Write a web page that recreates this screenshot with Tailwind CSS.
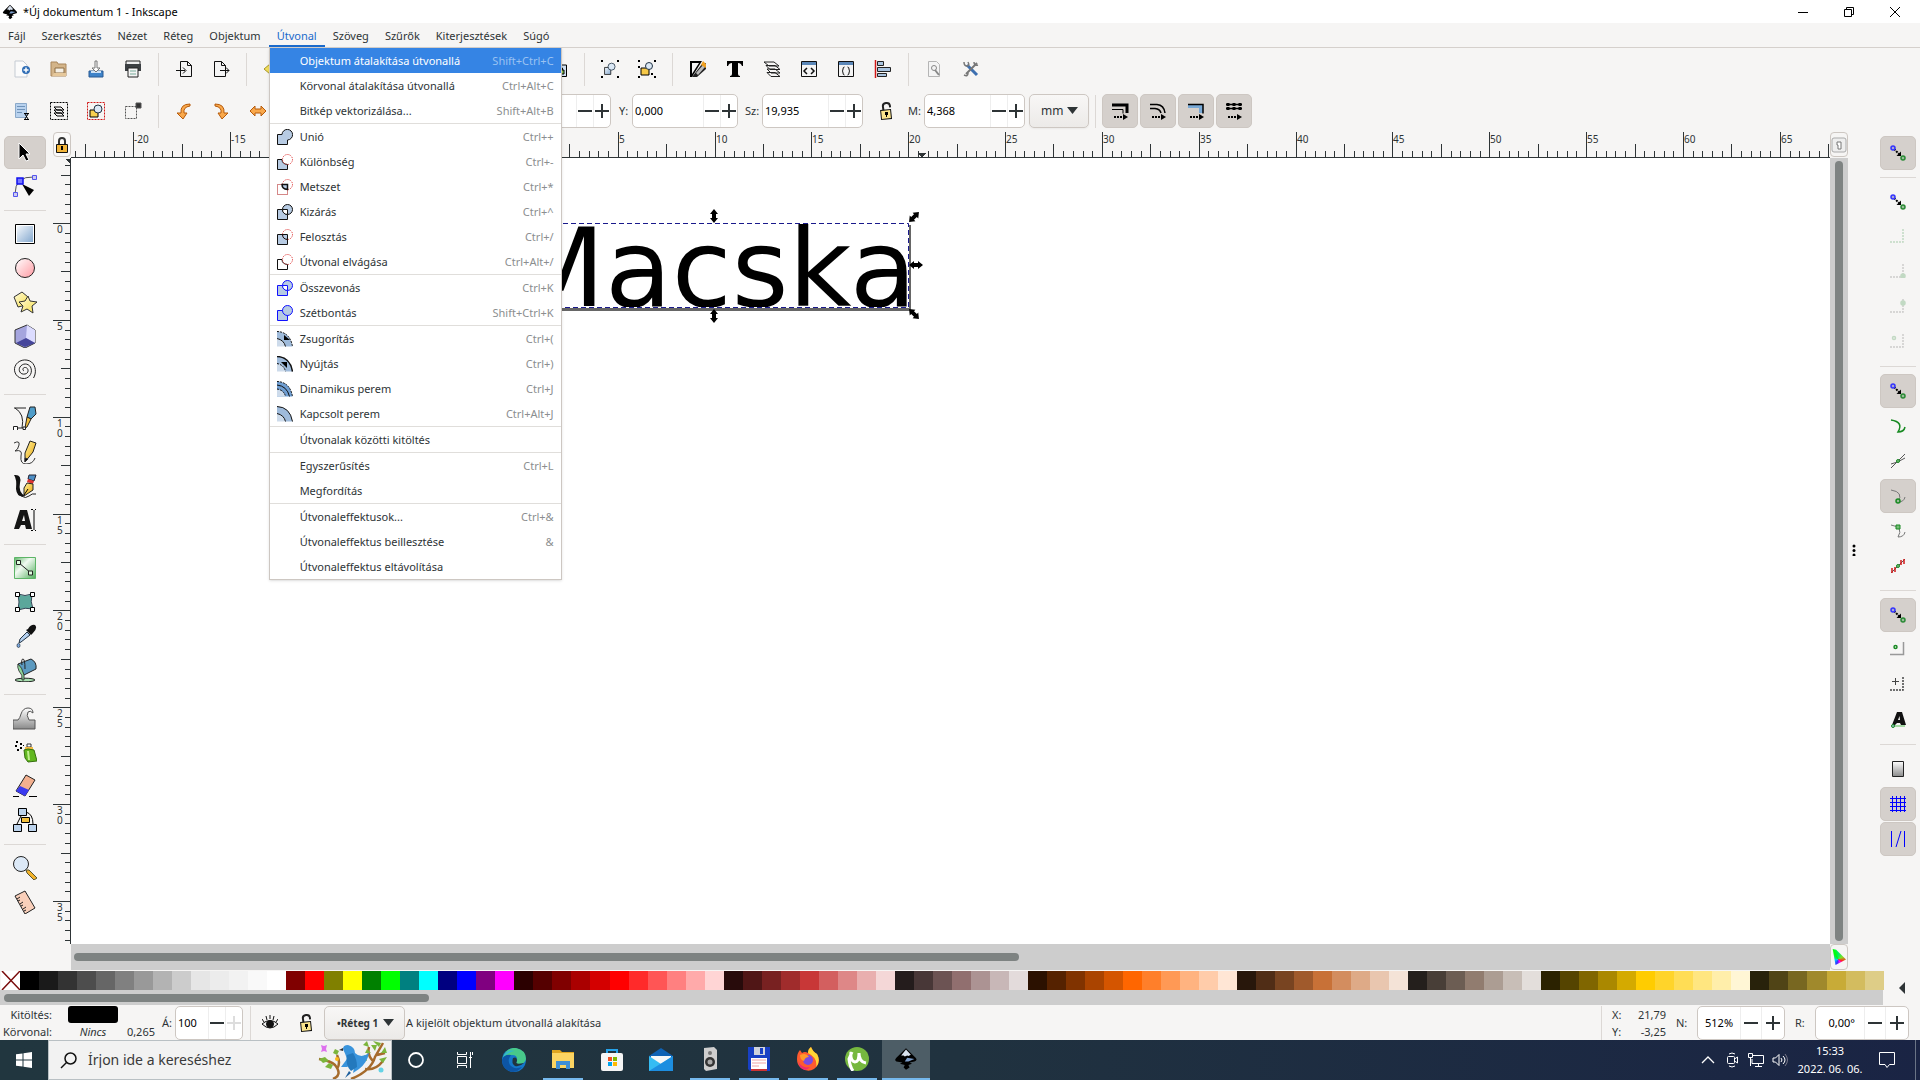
<!DOCTYPE html>
<html lang="hu">
<head>
    <meta charset="UTF-8">
    <meta name="viewport" content="width=device-width, initial-scale=1.0">
    <title>*Új dokumentum 1 - Inkscape</title>
    <script src="https://cdn.jsdelivr.net/npm/@tailwindcss/browser@4"></script>
</head>
<body class="h-screen flex flex-col overflow-hidden bg-[#f6f5f4] text-[#2e3436] text-[11px] leading-4 font-['Noto_Sans','Open_Sans',sans-serif]">

    <!-- shared icons -->
    <svg class="absolute size-0">
        <defs>
            <linearGradient id="g-blue" x1="0" y1="0" x2="1" y2="1"><stop offset="0" stop-color="#f4f8fc"/><stop offset="1" stop-color="#85a9cf"/></linearGradient>
            <linearGradient id="g-pink" x1="0" y1="0" x2="1" y2="1"><stop offset="0" stop-color="#fff"/><stop offset="1" stop-color="#ff9aa2"/></linearGradient>
            <linearGradient id="g-yel" x1="0" y1="0" x2="1" y2="1"><stop offset="0" stop-color="#fffbe0"/><stop offset="1" stop-color="#f7e04a"/></linearGradient>
            <linearGradient id="g-green" x1="0" y1="0" x2="1" y2="1"><stop offset="0" stop-color="#5db567"/><stop offset=".4" stop-color="#f2faf2"/><stop offset="1" stop-color="#4fae5b"/></linearGradient>
            <linearGradient id="g-gray" x1="0" y1="0" x2="0" y2="1"><stop offset="0" stop-color="#fff"/><stop offset="1" stop-color="#8a8a8a"/></linearGradient>
            <linearGradient id="g-gold" x1="0" y1="0" x2="1" y2="1"><stop offset="0" stop-color="#fff3a0"/><stop offset="1" stop-color="#e8a000"/></linearGradient>
            <symbol id="inkscape" viewBox="0 0 20 20">
                <path d="M10 1 18 9Q20 11 17 12L13 13 15 14 12 15 13 17 10 19 8 17 9 15 5 14 7 13 2 12Q0 11 2 9Z" fill="#000"/>
                <path d="M10 2 14 6.500 12 7.500 11 7 9 8 8 7 6 7Z" fill="#d9e2ee"/><path d="M11 9 17 10 12 12 9 12Z" fill="#7b9cc9"/>
            </symbol>
            <symbol id="snap" viewBox="0 0 16 16">
                <path d="M4 4 10 10" stroke="#000" stroke-width="2" stroke-dasharray="2 1"/><path d="M11 11V6.500L6.500 11Z"/>
                <circle cx="3" cy="3" r="2" fill="#aac" stroke="#33f" stroke-width="1.500"/><circle cx="13" cy="13" r="2" fill="#9b9" stroke="#2a8a35" stroke-width="1.500"/>
            </symbol>
            <symbol id="unlock" viewBox="0 0 16 20">
                <path d="M5 10V5Q5 2 8.500 2T12 5V7" transform="rotate(-8 8 6)" fill="none" stroke="#222" stroke-width="2"/>
                <rect x="3" y="9" width="10" height="9" transform="rotate(-6 8 13)" fill="#fbe58d" stroke="#111"/><path d="M7 11h3v3h-1v2h-1v-2h-1z"/>
            </symbol>
            <symbol id="shapes" viewBox="0 0 18 18"><path d="M2 7h8v9H2z" fill="url(#g-blue)" stroke="#111"/><circle cx="11" cy="6" r="4.500" fill="#dbe8f5" stroke="#234"/></symbol>
            <symbol id="corners" viewBox="0 0 18 18"><path d="M0 0h2v2H0zM16 0h2v2h-2zM0 16h2v2H0zM16 16h2v2h-2z"/></symbol>
            <symbol id="minus" viewBox="0 0 14 14"><path d="M0 6h14v2H0z" fill="currentColor"/></symbol>
            <symbol id="plus" viewBox="0 0 14 14"><path d="M0 6h14v2H0zM6 0h2v14H6z" fill="currentColor"/></symbol>
            <symbol id="turn" viewBox="0 0 18 18"><path d="M15 2Q5 2 6 11H2L8 17 12 11H9Q8 5 15 4Z" fill="#f9a84b" stroke="#b65a0a"/></symbol>
            <symbol id="flip" viewBox="0 0 18 18"><path d="M1 9 6 4V7H12V4L17 9 12 14V11H6V14Z" fill="#f9a84b" stroke="#b65a0a"/></symbol>
            <symbol id="arrow" viewBox="0 0 12 14"><path d="M6 0 10 5H8V9H10L6 14 2 9H4V5H2Z"/></symbol>
        </defs>
    </svg>

    <!-- title bar -->
    <header class="h-[23px] shrink-0 flex items-center bg-white text-black">
        <svg class="size-4 ml-[2px] mr-[5px]"><use href="#inkscape"/></svg>
        <h1 class="flex-1">*Új dokumentum 1 - Inkscape</h1>
        <button aria-label="Kis méret" class="w-[46px] h-full grid place-items-center"><svg class="size-[10px]" viewBox="0 0 10 10"><path d="M0 5.500h10" stroke="#000"/></svg></button>
        <button aria-label="Előző méret" class="w-[46px] h-full grid place-items-center"><svg class="size-[10px]" viewBox="0 0 10 10" fill="none" stroke="#000"><path d="M.5 2.500h7v7h-7zM2.500 2.500v-2h7v7h-2"/></svg></button>
        <button aria-label="Bezárás" class="w-[46px] h-full mr-[2px] grid place-items-center"><svg class="size-[10px]" viewBox="0 0 10 10" stroke="#000"><path d="M0 0 10 10M10 0 0 10"/></svg></button>
    </header>

    <!-- menu bar -->
    <nav class="h-[25px] shrink-0 flex border-b border-[#d5d0cc] [&>button]:px-2 [&>button]:pt-[2px]">
        <button>Fájl</button>
        <button>Szerkesztés</button>
        <button>Nézet</button>
        <button>Réteg</button>
        <button>Objektum</button>
        <div class="relative flex">
            <button class="px-2 pt-1 text-[#1b6acb] border-b-2 border-[#1b6acb]">Útvonal</button>
            <ul id="path-menu" class="absolute z-10 top-full left-0 mt-px w-[293px] bg-white border border-t-0 border-[#cdc7c2] shadow-sm"></ul>
        </div>
        <button>Szöveg</button>
        <button>Szűrők</button>
        <button>Kiterjesztések</button>
        <button>Súgó</button>
    </nav>

    <!-- command bar -->
    <div class="h-[42px] shrink-0 flex items-center gap-px pl-1 *:shrink-0 [&>button]:w-9 [&>button]:h-8 [&>button]:grid [&>button]:place-items-center [&>hr]:w-px [&>hr]:h-[33px] [&>hr]:mx-[6px] [&>hr]:border-0 [&>hr]:bg-[#dcd8d5] [&_svg]:size-[18px]">
        <button aria-label="Új"><svg viewBox="0 0 18 18"><path d="M2 1h8l4 4v12H2z" fill="#fbfbfb" stroke="#c5cbd3"/><circle cx="13" cy="10" r="4" fill="#2f6db5"/><path d="M13 7.500v5M10.500 10h5" stroke="#fff" stroke-width="1.500"/></svg></button>
        <button aria-label="Megnyitás"><svg viewBox="0 0 18 18"><path d="M1 2h6l1 2h8v12H1z" fill="#d3b489" stroke="#a9855a"/><path d="M5 8h9v5H5z" fill="#f5f0e6" stroke="#8c6c43"/><path d="M2 16 4 13h12v3z" fill="#e6c89b"/></svg></button>
        <button aria-label="Mentés"><svg viewBox="0 0 18 18"><path d="M2 11h14v6H2z" fill="#3f83c9" stroke="#2b5a93"/><path d="M4 11h10v2H4z" fill="#cfe2f6"/><path d="M8 1h2v7h3l-4 4-4-4h3z" fill="#fff" stroke="#777"/></svg></button>
        <button aria-label="Nyomtatás"><svg viewBox="0 0 18 18"><path d="M2 1h14v4H2z" fill="#eee" stroke="#222"/><path d="M1 4h16v7H1z" fill="#3b3f42"/><path d="M4 8h10v9H4z" fill="#f4f4f4" stroke="#222"/><path d="M6 11h6M6 14h6" stroke="#7a9"/></svg></button>
        <hr>
        <button aria-label="Importálás"><svg viewBox="0 0 18 18" stroke="#111"><path d="M5.500 1.500h7l4 4v11h-11z" fill="#f4f4f4"/><path d="M12.500 1.500v4h4M1 10.500h9M8 7.500l3 3-3 3" fill="none"/></svg></button>
        <button aria-label="Exportálás"><svg viewBox="0 0 18 18" stroke="#111"><path d="M2.500 1.500h7l4 4v11h-11z" fill="#f4f4f4"/><path d="M9.500 1.500v4h4M8 10.500h9M14 7.500l3 3-3 3" fill="none"/></svg></button>
        <hr>
        <button aria-label="Visszavonás"><svg viewBox="0 0 18 18"><path d="M1 9 7 4V7Q16 6 16 15 13 10 7 11V14Z" fill="#f3df5b" stroke="#a8962a"/></svg></button>
        <button aria-label="Mégis"><svg viewBox="0 0 18 18"><path d="M17 9 11 4V7Q2 6 2 15 5 10 11 11V14Z" fill="#9ed36a" stroke="#4b8a1e"/></svg></button>
        <hr>
        <button aria-label="Másolás"></button>
        <button aria-label="Kivágás"></button>
        <button aria-label="Beillesztés"></button>
        <hr>
        <button aria-label="Nagyítás a kijelölésre"></button>
        <button aria-label="Nagyítás a rajzra"></button>
        <button aria-label="Klón leválasztása"><svg viewBox="0 0 18 18"><path d="M5 5h11.500v11.500H5z" fill="#cfdff0" stroke="#000"/><path d="M8 10h6v4H8zM9.500 10V8h3v2" fill="#8bc34a" stroke="#000"/></svg></button>
        <hr>
        <button aria-label="Csoportosítás"><svg viewBox="0 0 18 18"><use href="#corners"/><use href="#shapes" x="2" y="2" width="14" height="14"/></svg></button>
        <button aria-label="Csoport szétbontása"><svg viewBox="0 0 18 18"><use href="#corners"/><path d="M3 8h8v7H3z" fill="#f7c948" stroke="#000"/><circle cx="11" cy="6" r="3.500" fill="#dbe8f5" stroke="#234"/><path d="M0 6h2v2H0zM13 13h2v2h-2z"/></svg></button>
        <hr>
        <button aria-label="Kitöltés és körvonal"><svg viewBox="0 0 18 18"><path d="M1 1h12L3 17H1z" fill="#000"/><path d="M3 3h7L3 14z" fill="#f4f4f4"/><path d="M17 3v6L8 17H3L13 4z" fill="#222"/><path d="M7 13 14 5l2 2-7 8z" fill="#bbb"/><path d="M14 1l3 3v4l-5-3z" fill="#f0a020"/></svg></button>
        <button aria-label="Szöveg és betűkészlet"><svg viewBox="0 0 18 18"><path d="M1 1h16v5h-1q-1-3-4-3v11q0 2 2 2v1H4v-1q2 0 2-2V3Q3 3 2 6H1z"/></svg></button>
        <button aria-label="Rétegek"><svg viewBox="0 0 18 18" fill="#f6f5f4" stroke="#222"><path d="M4 12.500h8l5 4H8zM4 9h8l5 4H8zM3 5.500h9l5 4H7zM1 2h10l5 4H6z"/></svg></button>
        <button aria-label="XML-szerkesztő"><svg viewBox="0 0 18 18" fill="none" stroke="#111"><path d="M1.500 1.500h15v15h-15z" fill="#f4f4f4"/><path d="M2 3.500h14" stroke="#5b87b8" stroke-width="3"/><path d="M7 8 4 11 7 14M11 8 14 11 11 14" stroke-width="1.500"/></svg></button>
        <button aria-label="Objektumok"><svg viewBox="0 0 18 18" fill="none" stroke="#111"><path d="M1.500 1.500h15v15h-15z" fill="#f4f4f4"/><path d="M2 3.500h14" stroke="#5b87b8" stroke-width="3"/><path d="M7.500 7Q6 7 6 9T5 11Q6 11 6 13T7.500 15M10.500 7Q12 7 12 9T13 11Q12 11 12 13T10.500 15"/></svg></button>
        <button aria-label="Igazítás"><svg viewBox="0 0 18 18"><path d="M1.500 0v18" stroke="#d01818" stroke-width="1.500"/><path d="M3.500 1.500h6v4h-6zM3.500 7.500h13v4h-13zM3.500 13.500h9v3h-9z" fill="#a9c4e0" stroke="#222"/></svg></button>
        <hr>
        <button aria-label="Dokumentum tulajdonságai"><svg viewBox="0 0 18 18" fill="none" stroke="#b5b5b5"><path d="M3.500 1.500h8l3 3v12h-11z" fill="#f4f4f4"/><circle cx="9" cy="8" r="2.500" stroke="#888"/><path d="M10 10 14 15" stroke="#888" stroke-width="2"/></svg></button>
        <button aria-label="Beállítások"><svg viewBox="0 0 18 18" fill="none"><path d="M5 5 15 15" stroke="#3d6fb0" stroke-width="3"/><path d="M15 3 4 14" stroke="#777" stroke-width="2"/><path d="M2 2Q2 6 5 6T6 2M12 2Q12 6 16 5M2 15Q6 17 6 13" stroke="#777" stroke-width="1.500"/></svg></button>
    </div>

    <!-- tool controls -->
    <div class="h-10 shrink-0 flex items-center pl-1 pt-[2px] *:shrink-0 [&_hr]:w-px [&_hr]:h-[33px] [&_hr]:mx-[6px] [&_hr]:border-0 [&_hr]:bg-[#dcd8d5]">
        <div class="flex items-center gap-px [&>button]:w-9 [&>button]:h-8 [&>button]:grid [&>button]:place-items-center [&_svg]:size-[18px]">
            <button aria-label="Összes kijelölése"><svg viewBox="0 0 18 18"><path d="M2.500 1.500h11v14h-11z" fill="#b9d2ee" stroke="#8ba9c9"/><path d="M4 4.500h8M4 7.500h8M4 10.500h5" stroke="#6f93ba"/><path d="M11 11.500h5M11 17.500h5M12 12l3 5M15 12l-3 5" stroke="#000"/></svg></button>
            <button aria-label="Kijelölés minden rétegen"><svg viewBox="0 0 18 18" fill="none" stroke="#000"><path d="M.5 .5h17v17h-17z" stroke-dasharray="2 1"/><path d="M4 11h7l3 3H7zM4 8h7l3 3H7zM4 5h7l3 3H7z" fill="#f6f5f4"/></svg></button>
            <button aria-label="Kijelölés megszüntetése"><svg viewBox="0 0 18 18"><path d="M.5 .5h17v17h-17z" fill="none" stroke="#d01818" stroke-dasharray="2 1"/><path d="M3 8h8v7H3z" fill="#f7d14f" stroke="#000"/><circle cx="11" cy="7" r="4" fill="#dbe8f5" stroke="#234"/></svg></button>
            <button aria-label="Érintéses kijelölés"><svg viewBox="0 0 18 18" fill="none" stroke="#555"><path d="M1.500 4.500h11v12h-11z" stroke-dasharray="2 1"/><path d="M12 1h5v5h-5z" fill="#333"/></svg></button>
            <hr>
            <button aria-label="Forgatás balra"><svg><use href="#turn"/></svg></button>
            <button aria-label="Forgatás jobbra"><svg class="-scale-x-100"><use href="#turn"/></svg></button>
            <button aria-label="Vízszintes tükrözés"><svg><use href="#flip"/></svg></button>
            <button aria-label="Függőleges tükrözés"><svg class="rotate-90"><use href="#flip"/></svg></button>
            <hr>
            <button aria-label="Legfelülre"></button>
            <button aria-label="Feljebb"></button>
            <button aria-label="Lejjebb"></button>
            <button aria-label="Legalulra"></button>
            <hr>
        </div>
        <label for="pos-x" class="w-4">X:</label>
        <div class="w-[106px] h-[34px] flex bg-white border border-[#cdc7c2] rounded-[5px] text-black">
            <input id="pos-x" value="0,000" class="min-w-0 flex-1 pl-[2px]">
            <button aria-label="Csökkentés" class="w-[17px] border-l border-[#eee] grid place-items-center text-[#2e3436]"><svg class="size-[14px]"><use href="#minus"/></svg></button>
            <button aria-label="Növelés" class="w-[17px] border-l border-[#eee] grid place-items-center text-[#2e3436]"><svg class="size-[14px]"><use href="#plus"/></svg></button>
        </div>
        <label for="pos-y" class="w-[21px] pl-2">Y:</label>
        <div class="w-[106px] h-[34px] flex bg-white border border-[#cdc7c2] rounded-[5px] text-black">
            <input id="pos-y" value="0,000" class="min-w-0 flex-1 pl-[2px]">
            <button aria-label="Csökkentés" class="w-[17px] border-l border-[#eee] grid place-items-center text-[#2e3436]"><svg class="size-[14px]"><use href="#minus"/></svg></button>
            <button aria-label="Növelés" class="w-[17px] border-l border-[#eee] grid place-items-center text-[#2e3436]"><svg class="size-[14px]"><use href="#plus"/></svg></button>
        </div>
        <label for="size-w" class="w-6 pl-[7px]">Sz:</label>
        <div class="w-[101px] h-[34px] flex bg-white border border-[#cdc7c2] rounded-[5px] text-black">
            <input id="size-w" value="19,935" class="min-w-0 flex-1 pl-[2px]">
            <button aria-label="Csökkentés" class="w-[17px] border-l border-[#eee] grid place-items-center text-[#2e3436]"><svg class="size-[14px]"><use href="#minus"/></svg></button>
            <button aria-label="Növelés" class="w-[17px] border-l border-[#eee] grid place-items-center text-[#2e3436]"><svg class="size-[14px]"><use href="#plus"/></svg></button>
        </div>
        <button aria-label="Arány rögzítése" class="w-[45px] h-8 grid place-items-center"><svg class="w-4 h-5"><use href="#unlock"/></svg></button>
        <label for="size-h" class="w-4">M:</label>
        <div class="w-[101px] h-[34px] flex bg-white border border-[#cdc7c2] rounded-[5px] text-black">
            <input id="size-h" value="4,368" class="min-w-0 flex-1 pl-[2px]">
            <button aria-label="Csökkentés" class="w-[17px] border-l border-[#eee] grid place-items-center text-[#2e3436]"><svg class="size-[14px]"><use href="#minus"/></svg></button>
            <button aria-label="Növelés" class="w-[17px] border-l border-[#eee] grid place-items-center text-[#2e3436]"><svg class="size-[14px]"><use href="#plus"/></svg></button>
        </div>
        <div class="relative ml-1 w-[60px] h-[34px]">
            <select aria-label="Mértékegység" class="size-full appearance-none pl-[11px] border border-[#cdc7c2] rounded-[5px] bg-linear-to-b from-[#f8f7f6] to-[#eceae8] shadow-xs text-[12px]"><option>mm</option><option>px</option></select>
            <svg class="absolute right-[11px] top-[13px] w-[11px] h-[7px] pointer-events-none" viewBox="0 0 11 7"><path d="M0 0h11L5.500 7z" fill="#2e3436"/></svg>
        </div>
        <hr>
        <div class="flex gap-[2px] [&>button]:w-9 [&>button]:h-[34px] [&>button]:grid [&>button]:place-items-center [&>button]:bg-[#d5d0cc] [&>button]:border [&>button]:border-[#cdc7c2] [&>button]:rounded-[5px] [&_svg]:size-[18px]">
            <button aria-label="Körvonal méretezése"><svg viewBox="0 0 18 18" fill="none" stroke="#000"><path d="M1 3h15v8" stroke-width="3"/><path d="M1 7.500h11v4"/><path d="M3 15h10" stroke-width="2" stroke-dasharray="2 1"/><path d="M12 12l5 3-5 3z" fill="#000" stroke="none"/></svg></button>
            <button aria-label="Sarkok méretezése"><svg viewBox="0 0 18 18" fill="none" stroke="#000"><path d="M1 2.500h7Q15 3 16 11M1 6.500h5Q11 7 12 11" stroke-width="1.500"/><path d="M3 15h10" stroke-width="2" stroke-dasharray="2 1"/><path d="M12 12l5 3-5 3z" fill="#000" stroke="none"/></svg></button>
            <button aria-label="Színátmenetek mozgatása"><svg viewBox="0 0 18 18" fill="none" stroke="#000"><path d="M1 2h15v9h-4V6H1z" fill="#79a9d6" stroke="none"/><path d="M1 2.500h15v9" stroke-width="1.500"/><path d="M3 15h10" stroke-width="2" stroke-dasharray="2 1"/><path d="M12 12l5 3-5 3z" fill="#000" stroke="none"/></svg></button>
            <button aria-label="Minták mozgatása"><svg viewBox="0 0 18 18" fill="none" stroke="#000"><path d="M1 2.500h16M1 6.500h16" stroke-width="1.500"/><path d="M3 1v8M9 1v8M15 1v8" stroke-width="3" stroke-dasharray="3 1"/><path d="M3 15h10" stroke-width="2" stroke-dasharray="2 1"/><path d="M12 12l5 3-5 3z" fill="#000" stroke="none"/></svg></button>
        </div>
    </div>

    <main class="flex-1 min-h-0 flex">
        <!-- toolbox -->
        <div class="w-[53px] shrink-0 flex flex-col gap-px pt-[6px] pl-1 pr-[7px] [&>button]:h-[33px] [&>button]:grid [&>button]:place-items-center [&>button]:rounded-[5px] [&>hr]:my-[6px] [&>hr]:border-[#dcd8d5] [&_svg]:size-6 [&_svg]:mb-px">
            <button aria-label="Kijelölés" class="bg-[#d5d0cc] border border-[#cdc7c2]"><svg viewBox="0 0 24 24"><path d="M6 3V19L10 15 13 21 16 20 13 14H17Z" fill="#000" stroke="#fff"/></svg></button>
            <button aria-label="Csomópontok"><svg viewBox="0 0 24 24" fill="none"><path d="M2 20Q2 2 21 3" stroke="#555"/><path d="M9 10 21 16 16 22Z" fill="#000"/><path d="M4 4h6v6H4z" fill="#77f" stroke="#11e" stroke-width="1.500"/><path d="M.5 18.500h4v4h-4zM19.500 1.500h4v4h-4z" fill="#cce" stroke="#55e"/></svg></button>
            <hr>
            <button aria-label="Téglalap"><svg viewBox="0 0 24 24"><path d="M2.500 2.500h19v19h-19z" fill="#fff" stroke="#000"/><path d="M4 4h16v16H4z" fill="url(#g-blue)"/></svg></button>
            <button aria-label="Ellipszis"><svg viewBox="0 0 24 24"><circle cx="12" cy="12" r="9.500" fill="url(#g-pink)" stroke="#222"/></svg></button>
            <button aria-label="Csillag"><svg viewBox="0 0 24 24" fill="url(#g-yel)" stroke="#333"><path d="M1 7 9 2 15 7 13 15 5 17Z"/><path d="M15 6 17 11 24 12 19 16 20 23 14 19 8 22 10 16 6 12 12 11Z"/></svg></button>
            <button aria-label="3D téglatest"><svg viewBox="0 0 24 24"><path d="M2 6 14 1 22 6V19L12 24 2 19Z" fill="#a5a5de" stroke="#333"/><path d="M14 1 22 6V19L13 14Z" fill="#dcdcff"/><path d="M3 19 13 14 22 19 12 23Z" fill="#45459a"/></svg></button>
            <button aria-label="Spirál"><svg viewBox="0 0 24 24" fill="none" stroke="#222"><path d="M11 13C9 12 10 9 12.500 9.500 16 10 16 15.500 12 16 7 17 5 12 7 9 9.500 5 15 5 17.500 9 20 14 17 20 11.500 20.500 4 21 0 14 2 8.500 4.500 2 13 0 18.500 4 23 8 23.500 15 20.500 20"/></svg></button>
            <hr>
            <button aria-label="Toll"><svg viewBox="0 0 24 24" fill="none" stroke="#222"><path d="M1 2H13M2 2Q12 8 9 22M4 22h8"/><path d="M17 1h5l1 7-5 5-4-2z" fill="#4f9cc8"/><path d="M14 11l4 2-4 8-2 1z" fill="#f3c03c"/><path d="M.5 20.500h4v4h-4zM10 21h2.500v2.500H10z" fill="#fff"/></svg></button>
            <button aria-label="Ceruza"><svg viewBox="0 0 24 24" fill="none" stroke="#333"><path d="M1 3Q7 0 6 5T2 11Q10 9 8 16 7 24 13 24 20 24 22 18"/><path d="M17 1 23 3 20 12 12 22V13Z" fill="url(#g-gold)" stroke="#222"/><path d="M12 18v4l3-3z" fill="#000"/></svg></button>
            <button aria-label="Művészi toll"><svg viewBox="0 0 24 24"><path d="M1 1Q9 0 7 9 5 18 12 22 4 24 3 15 4 5 1 1Z" fill="#111"/><path d="M8 22Q13 25 16 22T23 20" fill="none" stroke="#222"/><path d="M16 1h7l-2 6-6-2z" fill="#4d8ec4" stroke="#223"/><path d="M15 5l6 2-1 3-6-2z" fill="#d33"/><path d="M14 9l6 1v6l-9 6V14z" fill="url(#g-gold)" stroke="#222"/><path d="M11 21l4-6" stroke="#000"/></svg></button>
            <button aria-label="Szöveg"><svg viewBox="0 0 24 24"><path d="M7 2h7l5 19h-6l-1-4H8l-2 4H1zM9 13h3l-1-6z" fill="#151515"/><path d="M18 1.500h2M22 1.500h1M21 2v20M18 22.500h2M22 22.500h1" stroke="#000"/></svg></button>
            <hr>
            <button aria-label="Színátmenet"><svg viewBox="0 0 24 24"><path d="M1.500 1.500h21v21h-21z" fill="url(#g-green)" stroke="#5db567"/><path d="M6 7 18 17" stroke="#222"/><path d="M3.500 4.500h4v4h-4zM15.500 15h4v4h-4z" fill="#dfd" stroke="#222"/></svg></button>
            <button aria-label="Színháló"><svg viewBox="0 0 24 24"><path d="M5 4Q12 7 19 4 17 12 20 19 12 17 5 20 7 12 5 4Z" fill="#5ba79b" stroke="#345"/><path d="M2.500 2.500h4v4h-4zM17.500 2.500h4v4h-4zM2.500 17.500h4v4h-4zM17.500 17.500h4v4h-4z" fill="#fff" stroke="#000"/></svg></button>
            <button aria-label="Pipetta"><svg viewBox="0 0 24 24"><path d="M15 5Q18 0 22 1 25 4 20 9L18 11 13 6Z" fill="#111"/><path d="M14 8 17 11 8 18 6 19 7 15Z" fill="#b4cfee" stroke="#234"/><ellipse cx="5.500" cy="21.500" rx="1.500" ry="2" fill="#7ea9e0" stroke="#234" stroke-width=".7"/></svg></button>
            <button aria-label="Festékesvödör"><svg viewBox="0 0 24 24"><ellipse cx="12" cy="22" rx="10" ry="1.800" fill="#a8e0b0" stroke="#222"/><path d="M5 6 18 1Q24 4 23 11L11 17Z" fill="#5c9ac0" stroke="#222"/><path d="M5 6Q9 9 11 17V22H9Q10 17 6 13Q4 9 5 6Z" fill="#8fd79b" stroke="#222" stroke-width=".8"/><path d="M9 7Q8 1 10 1T12 11" fill="none" stroke="#222"/></svg></button>
            <hr>
            <button aria-label="Nyújtás"><svg viewBox="0 0 24 24"><path d="M0 14H5Q7 12 8 8 10 2 15 2 20 2 20 7 17 4 15 6 13 9 16 14H22V23H0Z" fill="url(#g-gray)" stroke="#555"/></svg></button>
            <button aria-label="Festékszóró"><svg viewBox="0 0 24 24"><path d="M3 1h2v2H3zM2 5h2v2H2zM4 9h2v2H4zM7 3h2v2H7zM7 7h2v2H7zM10 5h1v1h-1z"/><path d="M14 4h4v3h-4z" fill="#fff" stroke="#333"/><path d="M12 7h8v3h-8z" fill="#f2ba45"/><path d="M11 10Q14 8 21 10L24 21 15 22 12 18Z" fill="#61b71f" stroke="#356f0e"/><path d="M14 11h2l1 9h-2z" fill="#bff08c"/></svg></button>
            <button aria-label="Radír"><svg viewBox="0 0 24 24"><path d="M13 1 22 6 12 22 3 17Z" fill="#f3b08f" stroke="#222"/><path d="M7 12 16 16 12 22 3 17Z" fill="#3a3af0"/><path d="M0 22.500h6M16 22.500h8" stroke="#000"/></svg></button>
            <button aria-label="Összekötő"><svg viewBox="0 0 24 24" stroke="#000"><path d="M8 8 4 16M13 4Q20 6 20 16" fill="none"/><path d="M5.500 .5h8v7h-8zM.5 16.500h8v7h-8zM15.500 16.500h8v7h-8z" fill="#bcd3ec"/><path d="M8.500 9.500h8v5h-8z" fill="#f3c03c"/></svg></button>
            <hr>
            <button aria-label="Nagyító"><svg viewBox="0 0 24 24"><path d="M13 14 16 14 24 22 21 24 14 17Z" fill="#f4b32a" stroke="#553"/><circle cx="8" cy="8" r="7.500" fill="#dce9f7" stroke="#222"/></svg></button>
            <button aria-label="Mérés"><svg viewBox="0 0 24 24" stroke="#222"><path d="M2 6 12 1 22 18 12 24Z" fill="#f9cfba"/><path d="M4 9l3-2M5 11l2-1M7 14l3-2M8 16l2-1M10 19l3-2M11 21l2-1"/></svg></button>
        </div>

        <!-- rulers, canvas, scroll bars -->
        <div class="flex-1 min-w-0 flex flex-col">
            <div class="h-7 shrink-0 flex">
                <button aria-label="Segédvonalak zárolása" class="w-[18px] h-[25px] mt-[2px] grid place-items-center bg-[#faf9f8] border border-[#cdc7c2] rounded-[4px]"><svg class="w-[14px] h-4" viewBox="0 0 14 16"><path d="M4 8V4Q4 1 7 1T10 4V8" fill="none" stroke="#333" stroke-width="2"/><path d="M1.500 7.500h11v8h-11z" fill="#f2b53a" stroke="#111"/><path d="M6 9h2v4H6z"/></svg></button>
                <svg id="ruler-x" class="flex-1 min-w-0 h-7 text-[10px]" fill="#2e3436" shape-rendering="crispEdges"></svg>
                <button aria-label="Színkezelés nézet" class="w-[18px] h-[25px] mt-[2px] grid place-items-center bg-[#f6f5f4] border border-[#cdc7c2] rounded-[4px]"><svg class="size-4" viewBox="0 0 16 16" fill="#eee" stroke="#aaa"><rect x="1" y="1" width="14" height="14" rx="2"/><path d="M6 5h4v7H7V8H6z" fill="#fff" stroke="#777"/></svg></button>
            </div>
            <div class="flex-1 min-h-0 flex">
                <svg id="ruler-y" class="w-[18px] h-full shrink-0 text-[10px]" fill="#2e3436" shape-rendering="crispEdges"></svg>
                <div class="relative flex-1 min-w-0 bg-white overflow-hidden">
                    <svg class="absolute inset-0 size-full">
                        <text x="440" y="148" class="text-[109px] font-['DejaVu_Sans',sans-serif]">Macska</text>
                        <path d="M300 150h540v3H300zM838 67h2v86h-2z" fill="#666"/>
                        <path d="M300 65.500H837.500V149.500H300" fill="none" stroke="#fff"/>
                        <path d="M300 65.500H837.500V149.500H300" fill="none" stroke="#1a1a8c" stroke-dasharray="5 3"/>
                        <use href="#arrow" x="637" y="51" width="12" height="14"/>
                        <use href="#arrow" x="637" y="151" width="12" height="14"/>
                        <use href="#arrow" x="-6" y="-7" width="12" height="14" transform="translate(845 107) rotate(90)"/>
                        <use href="#arrow" x="-6" y="-7" width="12" height="14" transform="translate(843 59) rotate(45)"/>
                        <use href="#arrow" x="-6" y="-7" width="12" height="14" transform="translate(843 156) rotate(-45)"/>
                    </svg>
                </div>
                <div class="w-[18px] shrink-0 bg-[#cdcdcd] px-[5px] py-[3px]"><div class="h-full rounded-full bg-[#7e8382]"></div></div>
            </div>
            <div class="h-[26px] shrink-0 flex pl-[18px]">
                <div class="flex-1 bg-[#cdcdcd] pt-[9px] pl-[3px]"><div class="w-[945px] h-2 rounded-full bg-[#7e8382]"></div></div>
                <button aria-label="Színkezelés" class="w-[18px] h-[26px] grid place-items-center bg-[#f6f5f4] border border-[#cdc7c2] rounded-[4px]"><span class="w-[14px] h-4 bg-conic-[at_45%_65%,#0e6,#8d2_60deg,#f22_110deg,#f0f_150deg,#33f_200deg,#0cf_260deg,#0f0_330deg,#0e6] [clip-path:polygon(5%_0,30%_5%,100%_65%,25%_100%)]"></span></button>
            </div>
        </div>

        <button aria-label="Panel" class="w-8 shrink-0 pl-1"><svg class="w-1 h-3" viewBox="0 0 4 12"><circle cx="2" cy="2" r="1.500"/><circle cx="2" cy="6.500" r="1.500"/><circle cx="2" cy="11" r="1.500"/></svg></button>

        <!-- snap bar -->
        <div class="w-10 shrink-0 flex flex-col gap-px pt-[6px] pr-1 [&>button]:h-[34px] [&>button]:grid [&>button]:place-items-center [&>button]:rounded-[5px] [&>hr]:my-[6px] [&>hr]:border-[#dcd8d5] [&_svg]:size-4">
            <button aria-label="Illesztés" class="bg-[#d5d0cc] border border-[#cdc7c2]"><svg><use href="#snap"/></svg></button>
            <hr>
            <button aria-label="Határoló téglalapok"><svg><use href="#snap"/></svg></button>
            <button aria-label="Élek"><svg class="opacity-25 mb-1" viewBox="0 0 16 16" fill="none" stroke="#2a8a35" stroke-width="1.500"><path d="M13 2v13H0" stroke-dasharray="2 1"/></svg></button>
            <button aria-label="Sarkok"><svg class="opacity-25 mb-1" viewBox="0 0 16 16" fill="none" stroke="#555" stroke-width="1.500"><path d="M13 2v13H0" stroke-dasharray="2 1"/><circle cx="13" cy="14" r="2" fill="#2a8a35" stroke="#2a8a35"/></svg></button>
            <button aria-label="Élközéppontok"><svg class="opacity-25 mb-1" viewBox="0 0 16 16" fill="none" stroke="#555" stroke-width="1.500"><path d="M13 2v13H0" stroke-dasharray="2 1"/><circle cx="13" cy="6" r="2" fill="#2a8a35" stroke="#2a8a35"/></svg></button>
            <button aria-label="Középpontok"><svg class="opacity-25 mb-1" viewBox="0 0 16 16" fill="none" stroke="#555" stroke-width="1.500"><path d="M13 2v13H0" stroke-dasharray="2 1"/><circle cx="4" cy="6" r="1.500" stroke="#2a8a35"/></svg></button>
            <hr>
            <button aria-label="Csomópontok illesztése" class="bg-[#d5d0cc] border border-[#cdc7c2]"><svg><use href="#snap"/></svg></button>
            <button aria-label="Útvonalak"><svg viewBox="0 0 16 16" fill="none" stroke="#188a22" stroke-width="1.500"><path d="M1 2Q14 4 8 14 14 14 15 9"/></svg></button>
            <button aria-label="Metszéspontok"><svg viewBox="0 0 16 16" fill="none" stroke="#555"><path d="M1 15 15 1M1 11Q7 10 15 5"/><circle cx="8" cy="8" r="1.500" fill="#7b7" stroke="#188a22"/></svg></button>
            <button aria-label="Csúcsok" class="bg-[#d5d0cc] border border-[#cdc7c2]"><svg viewBox="0 0 16 16" fill="none" stroke="#777"><path d="M1 2Q14 4 8 14 14 14 15 9"/><circle cx="8" cy="13" r="2" fill="#9b9" stroke="#188a22" stroke-width="1.500"/></svg></button>
            <button aria-label="Sima csomópontok"><svg viewBox="0 0 16 16" fill="none" stroke="#777"><path d="M1 2Q14 4 8 14 14 14 15 9"/><path d="M6 2h4v4H6z" fill="#7b7" stroke="#188a22"/></svg></button>
            <button aria-label="Vonalközéppontok"><svg viewBox="0 0 16 16" fill="none"><path d="M1 15 15 1" stroke="#555"/><path d="M2 15V10M5 14V9M11 7V2M14 6V1" stroke="#d01818" stroke-width="1.500"/><circle cx="8" cy="8" r="1.500" fill="#7b7" stroke="#188a22"/></svg></button>
            <hr>
            <button aria-label="Egyéb pontok" class="bg-[#d5d0cc] border border-[#cdc7c2]"><svg><use href="#snap"/></svg></button>
            <button aria-label="Objektumközéppontok"><svg class="mb-1" viewBox="0 0 16 16" fill="none"><path d="M13.500 2v12.500H0" stroke="#999" stroke-width="1.500"/><circle cx="5.500" cy="7" r="1.500" stroke="#188a22" stroke-width="1.500"/></svg></button>
            <button aria-label="Forgatási középpontok"><svg class="mb-1" viewBox="0 0 16 16" fill="none" stroke="#444"><path d="M13 2v13H0" stroke-dasharray="2 1" stroke-width="1.500"/><path d="M5.500 3v7M2 6.500h7"/></svg></button>
            <button aria-label="Szöveg alapvonala"><svg viewBox="0 0 16 16"><path d="M7 0h5l4 13h-5l-1-2H7l-2 2H2zM8 8h2L9.500 4z" fill="#111"/><path d="M3 14h12" stroke="#5b5"/><circle cx="3" cy="14" r="1.500" fill="#9bc" stroke="#188a22"/></svg></button>
            <hr>
            <button aria-label="Lapszegély"><svg viewBox="0 0 16 16"><path d="M2.500 .5h11v15h-11z" fill="url(#g-gray)" stroke="#222"/></svg></button>
            <button aria-label="Rácsok" class="bg-[#d5d0cc] border border-[#cdc7c2]"><svg viewBox="0 0 16 16"><path d="M2.500 0v16M6.500 0v16M10.500 0v16M14.500 0v16M0 2.500h16M0 6.500h16M0 10.500h16M0 14.500h16" stroke="#00f"/></svg></button>
            <button aria-label="Segédvonalak" class="bg-[#d5d0cc] border border-[#cdc7c2]"><svg viewBox="0 0 16 16"><path d="M1.500 0v16M14.500 0v16M11 0 6 16" stroke="#00f"/></svg></button>
        </div>
    </main>

    <!-- palette -->
    <div class="h-[35px] shrink-0 flex pt-px">
        <div class="flex-1 min-w-0 flex flex-col">
            <div id="palette" class="h-[19px] flex pl-px"></div>
            <div class="h-[15px] bg-[#cdcdcd] pt-1 pl-1"><div class="w-[425px] h-2 rounded-full bg-[#7e8382]"></div></div>
        </div>
        <button aria-label="Paletta" class="w-[37px] grid place-items-center"><svg class="w-[6px] h-[12px]" viewBox="0 0 6 12"><path d="M6 0v12L0 6z" fill="#2e3436"/></svg></button>
    </div>

    <!-- status bar -->
    <footer class="h-[35px] shrink-0 flex items-center">
        <div class="w-[52px] text-right leading-[17px]"><p>Kitöltés:</p><p>Körvonal:</p></div>
        <div class="w-[103px] pl-4 leading-[17px]">
            <button aria-label="Kitöltés" class="block w-[50px] h-[17px] bg-black rounded-[3px]"></button>
            <p class="flex justify-between"><i class="w-[50px] text-center">Nincs</i><span>0,265</span></p>
        </div>
        <label for="opacity" class="w-5 pl-[7px]">Á:</label>
        <div class="w-[68px] h-[34px] flex bg-white border border-[#cdc7c2] rounded-[5px] text-black">
            <input id="opacity" value="100" class="min-w-0 flex-1 pl-[2px]">
            <button aria-label="Csökkentés" class="w-[17px] border-l border-[#eee] grid place-items-center text-[#2e3436]"><svg class="size-[14px]"><use href="#minus"/></svg></button>
            <button aria-label="Növelés" disabled class="w-[17px] border-l border-[#eee] grid place-items-center text-[#ddd]"><svg class="size-[14px]"><use href="#plus"/></svg></button>
        </div>
        <div class="ml-[7px] w-px h-[34px] bg-[#dcd8d5]"></div>
        <button aria-label="Réteg láthatósága" class="w-9 ml-px grid place-items-center"><svg class="size-4" viewBox="0 0 16 16" fill="none" stroke="#111"><path d="M0 9Q8 2 16 9 8 17 0 9Z" fill="#eee"/><circle cx="8" cy="9" r="3.500" fill="#111"/><path d="M2 7 0 4M5 5 4 1M8 4V0M11 5 12 1M14 7 16 4"/></svg></button>
        <button aria-label="Réteg zárolása" class="w-9 grid place-items-center"><svg class="w-4 h-5"><use href="#unlock"/></svg></button>
        <div class="relative w-[81px] h-[34px]">
            <select aria-label="Réteg" class="size-full appearance-none pl-3 border border-[#cdc7c2] rounded-[5px] bg-linear-to-b from-[#f8f7f6] to-[#eceae8] text-[10px] font-bold"><option>•Réteg 1</option></select>
            <svg class="absolute right-[11px] top-[13px] w-[11px] h-[7px] pointer-events-none" viewBox="0 0 11 7"><path d="M0 0h11L5.500 7z" fill="#2e3436"/></svg>
        </div>
        <p class="flex-1 pl-px">A kijelölt objektum útvonallá alakítása</p>
        <div class="w-px h-[34px] bg-[#dcd8d5]"></div>
        <dl class="w-[64px] ml-[10px] pr-[10px] grid grid-cols-[auto_1fr] leading-[17px]"><dt>X:</dt><dd class="text-right">21,79</dd><dt>Y:</dt><dd class="text-right">-3,25</dd></dl>
        <label for="zoom" class="w-[21px]">N:</label>
        <div class="w-[88px] h-[34px] flex bg-white border border-[#cdc7c2] rounded-[5px] text-black">
            <input id="zoom" value="512%" class="min-w-0 flex-1 pl-[7px]">
            <button aria-label="Kicsinyítés" class="w-[21px] border-l border-[#eee] grid place-items-center text-[#2e3436]"><svg class="size-[14px]"><use href="#minus"/></svg></button>
            <button aria-label="Nagyítás" class="w-[23px] border-l border-[#eee] grid place-items-center text-[#2e3436]"><svg class="size-[14px]"><use href="#plus"/></svg></button>
        </div>
        <label for="rotation" class="w-[30px] pl-[10px]">R:</label>
        <div class="w-[94px] h-[34px] mr-[11px] flex bg-white border border-[#cdc7c2] rounded-[5px] text-black">
            <input id="rotation" value="0,00°" class="min-w-0 flex-1 pr-[9px] text-right">
            <button aria-label="Forgatás balra" class="w-[21px] border-l border-[#eee] grid place-items-center text-[#2e3436]"><svg class="size-[14px]"><use href="#minus"/></svg></button>
            <button aria-label="Forgatás jobbra" class="w-[23px] border-l border-[#eee] grid place-items-center text-[#2e3436]"><svg class="size-[14px]"><use href="#plus"/></svg></button>
        </div>
    </footer>

    <!-- Windows taskbar -->
    <div class="h-10 shrink-0 flex items-center bg-linear-to-r from-[#21363f] via-[#20323f] to-[#1a2444] text-white">
        <button aria-label="Start" class="w-12 h-10 grid place-items-center"><svg class="size-4" viewBox="0 0 16 16" fill="#fff"><path d="M0 2.300 6.500 1.400V7.500H0zM7.500 1.300 16 0V7.500H7.500zM0 8.500H6.500V14.600L0 13.700zM7.500 8.500H16V16L7.500 14.700z"/></svg></button>
        <label class="w-[344px] h-10 flex items-center bg-[#f2f2f2] border border-[#b9c0c4] text-[#3a3a3a]">
            <svg class="size-[17px] ml-[11px] mr-[11px] shrink-0" viewBox="0 0 17 17" fill="none" stroke="#111" stroke-width="1.500"><circle cx="10.500" cy="6.500" r="5.500"/><path d="M6.500 10.500 1 16"/></svg>
            <input aria-label="Keresés" placeholder="Írjon ide a kereséshez" class="min-w-0 flex-1 text-[14px] placeholder:text-[#3a3a3a] placeholder:opacity-100">
            <svg class="w-[70px] h-[38px] shrink-0 mr-[4px]" viewBox="0 0 70 38" fill="none">
                <path d="M16 38Q26 34 18 24 14 20 2 18M20 28Q24 22 20 14M34 38Q54 30 58 16L66 2M56 20Q50 14 52 6M48 28Q58 30 66 20M60 14 68 12" stroke="#a56b2c" stroke-width="2.500"/>
                <path d="M2 18 6 22 12 20 8 16ZM12 22 8 26 14 28 16 24ZM20 14 16 12 18 8 22 10ZM52 6 46 4 50 0ZM58 10 54 4 60 4ZM62 6 56 0 64 2ZM64 12 68 6 70 12ZM62 18 70 16 66 22ZM54 12 48 12 50 8ZM50 20 44 18 48 14Z" fill="#7bb53c"/>
                <path d="M26 8Q26 4 31 4 38 6 38 12 44 18 52 12 50 22 42 28L36 32 38 22 30 26 24 26 30 18Q28 12 26 8Z" fill="#3994dc"/>
                <path d="M36 12Q40 18 40 26L34 30Q28 24 30 14Z" fill="#2479bd"/><path d="M26 7 22 9 26 10Z" fill="#333"/><path d="M32 30 28 37 34 32Z" fill="#1d5f9d"/>
                <path d="M4 4 7 5 10 4 9 8 10 11 7 10 4 11 5 8Z" fill="#dd70ee"/><circle cx="20" cy="18" r="2" fill="#fbb81b"/><circle cx="64" cy="29" r="2.500" fill="#65d3e6"/>
            </svg>
        </label>
        <div class="h-full flex gap-px [&>button]:w-12 [&>button]:h-10 [&>button]:grid [&>button]:place-items-center [&_svg]:size-6 flex-1">
            <button aria-label="Cortana"><svg viewBox="0 0 24 24"><circle cx="12" cy="12" r="7" fill="none" stroke="#fff" stroke-width="1.800"/></svg></button>
            <button aria-label="Feladatnézet"><svg viewBox="0 0 24 24" fill="none" stroke="#fff"><path d="M4.500 8.500h9v7h-9zM4.500 4v2.500h9V4M4.500 20v-2.500h9V20M17.500 4v16M19.500 4v3M16 9.500h3"/></svg></button>
            <button aria-label="Edge"><svg viewBox="0 0 24 24"><circle cx="12" cy="12" r="12" fill="#1577c9"/><path d="M1 9Q5-1 14 0 24 2 24 11 23 16 17 16 13 16 15 13 16 7 10 7 4 7 1 9Z" fill="#48c98a"/><path d="M0 12Q2 6 9 7 5 12 8 17 12 22 20 19 14 26 7 23 0 20 0 12Z" fill="#0d55a5"/><path d="M1 9Q5 1 13 3 8 3 1 9Z" fill="#2fb6d5"/><path d="M15 13Q12 17 22 15 18 19 13 18 9 15 11 10 15 8 15 13Z" fill="#21343e"/></svg></button>
            <button aria-label="Fájlkezelő" class="border-b-2 border-[#76b9ed] mx-[4px] w-10!"><svg viewBox="0 0 24 24"><path d="M1 3h8l2 2h12v16H1z" fill="#e0a520"/><path d="M1 6h22v15H1z" fill="#fcd462"/><path d="M5 14h14v8h-4v-4H9v4H5z" fill="#3f8fd6"/></svg></button>
            <button aria-label="Store"><svg viewBox="0 0 24 24"><path d="M7 6V2h10v4" fill="none" stroke="#26a3ea" stroke-width="2"/><rect x="1" y="5" width="22" height="18" rx="2" fill="#f5f5f5"/><path d="M8 9h4v4H8z" fill="#f25022"/><path d="M13 9h4v4h-4z" fill="#7fba00"/><path d="M8 14h4v4H8z" fill="#00a4ef"/><path d="M13 14h4v4h-4z" fill="#ffb900"/></svg></button>
            <button aria-label="Posta"><svg viewBox="0 0 24 24"><path d="M0 8 12 0 24 8V23H0z" fill="#0f62b4"/><path d="M2 8h20v8H2z" fill="#f7f7f7"/><path d="M0 8 12 16 24 8V23H0z" fill="#35bcf3"/><path d="M0 23 24 8V23z" fill="#1d8ee0"/></svg></button>
            <button aria-label="Hangkeverő" class="border-b-2 border-[#76b9ed] mx-[4px] w-10!"><svg viewBox="0 0 24 24"><path d="M6 1 16 0 19 3V22L8 24 6 22Z" fill="#cfcfcf"/><circle cx="12" cy="6" r="2" fill="#777"/><circle cx="12" cy="15" r="5" fill="#333"/><circle cx="12" cy="15" r="2.500" fill="#aaa"/></svg></button>
            <button aria-label="Total Commander" class="border-b-2 border-[#76b9ed] mx-[4px] w-10!"><svg viewBox="0 0 24 24"><path d="M1 0h22v24H3l-2-2z" fill="#1840c4"/><path d="M7 0h11v8H7z" fill="#cfd3dc"/><path d="M13 1h3v6h-3z" fill="#1840c4"/><path d="M4 11h16v12H4z" fill="#fff"/><path d="M5 13h14M5 16h14M5 19h7" stroke="#f0a5a5"/><path d="M4 23h16" stroke="#c33" stroke-width="2"/></svg></button>
            <button aria-label="Firefox" class="border-b-2 border-[#76b9ed] mx-[4px] w-10!"><svg viewBox="0 0 24 24"><path d="M1 12Q1 6 4 3L6 6Q9 4 12 6 12 2 15 0 17 5 21 7 26 16 18 22 12 26 5 21 1 18 1 12Z" fill="#ff5b2e"/><path d="M15 0Q17 5 21 7 25 14 20 20 22 11 12 6 12 2 15 0Z" fill="#ffd735"/><circle cx="12" cy="13" r="5" fill="#7a4be0"/><path d="M4 8Q10 5 13 10 9 10 8 14 4 13 4 8Z" fill="#ff9a2a"/><path d="M2 14Q6 22 14 20 9 26 4 20Z" fill="#ed2c70"/></svg></button>
            <button aria-label="µTorrent" class="border-b-2 border-[#76b9ed] mx-[4px] w-10!"><svg viewBox="0 0 24 24"><circle cx="12" cy="12" r="12" fill="#76b83f"/><path d="M7 5 4 12Q5 20 8 24M6 5Q5 14 10 15 14 15 14 6M14 6Q14 15 21 16" fill="none" stroke="#fff" stroke-width="3"/></svg></button>
            <button aria-label="Inkscape" class="bg-[#4d5d66] border-b-2 border-[#76b9ed]"><svg><use href="#inkscape"/></svg></button>
        </div>
        <div class="flex items-center [&>button]:w-6 [&>button]:h-10 [&>button]:grid [&>button]:place-items-center [&_svg]:size-4">
            <button aria-label="Rejtett ikonok"><svg viewBox="0 0 16 16" fill="none" stroke="#fff" stroke-width="1.300"><path d="M2 11 8 5 14 11"/></svg></button>
            <button aria-label="Kamera"><svg viewBox="0 0 16 16" fill="none" stroke="#fff"><rect x="3.500" y="4.500" width="7" height="7" rx="1"/><path d="M10.500 7 13.500 5v6l-3-2M5 2Q8 0 11 2M5 14Q8 16 11 14"/></svg></button>
            <button aria-label="Hálózat"><svg viewBox="0 0 16 16" fill="none" stroke="#fff"><path d="M5 3.500h10.500v8H4V7M7 14.500h7M10.500 12v2M.5 1.500h4v4h-4zM2.500 6v8"/></svg></button>
            <button aria-label="Hangerő"><svg viewBox="0 0 16 16" fill="none" stroke="#fff"><path d="M1 6h2.500L7 2.500v11L3.500 10H1z"/><path d="M9 6q2 2 0 4M11 4q4 4 0 8"/><path d="M13 2q5 6 0 12" stroke="#778"/></svg></button>
        </div>
        <button class="w-[76px] text-center leading-[18px] whitespace-nowrap"><time>15:33</time><br>2022. 06. 06.</button>
        <button aria-label="Értesítések" class="w-[38px] h-10 grid place-items-center"><svg class="w-4 h-4" viewBox="0 0 16 16" fill="none" stroke="#fff"><path d="M.5 .5h15v12h-5L8 15.500 6 12.500H.5z"/></svg></button>
        <button aria-label="Asztal megjelenítése" class="w-[5px] h-10 ml-[9px] border-l border-[#6a7486]"></button>
    </div>

    <script>
        // menu rows: label, shortcut, icon; null is a separator
        const menuItems = [
            ['Objektum átalakítása útvonallá', 'Shift+Ctrl+C'],
            ['Körvonal átalakítása útvonallá', 'Ctrl+Alt+C'],
            ['Bitkép vektorizálása...', 'Shift+Alt+B'],
            null,
            ['Unió', 'Ctrl++', '<path d="M.5 5.500H5A5.300 5.300 0 1 1 10.500 11V15.500H.5Z" fill="#b7cbe3" stroke="#111"/>'],
            ['Különbség', 'Ctrl+-', '<path d="M.5 5.500H5Q5 10 10.500 10.500V15.500H.5Z" fill="#b7cbe3" stroke="#111"/><circle cx="10.500" cy="5.500" r="5" fill="none" stroke="#d33" stroke-dasharray="1 1"/>'],
            ['Metszet', 'Ctrl+*', '<path d="M.5 5.500h10v10H.5z" fill="none" stroke="#a11" stroke-dasharray="1 1"/><circle cx="10.500" cy="5.500" r="5" fill="none" stroke="#d33" stroke-dasharray="1 1"/><path d="M5 5.500h5.500v5Q5 10 5 5.500Z" fill="#b7cbe3" stroke="#111" stroke-width="1.500"/>'],
            ['Kizárás', 'Ctrl+^', '<path d="M.5 5.500h10v10H.5z" fill="#b7cbe3" stroke="#111"/><circle cx="10.500" cy="5.500" r="5" fill="#b7cbe3" stroke="#111"/><path d="M5.500 5.500h5v5Q5.500 10 5.500 5.500Z" fill="#fff" stroke="#111"/>'],
            ['Felosztás', 'Ctrl+/', '<path d="M.5 5.500h10v10H.5z" fill="#b7cbe3" stroke="#111"/><circle cx="10.500" cy="5.500" r="5" fill="none" stroke="#d33" stroke-dasharray="1 1"/><path d="M5.500 5.500Q5.500 10 10.500 10.500" fill="none" stroke="#111"/>'],
            ['Útvonal elvágása', 'Ctrl+Alt+/', '<path d="M5 5.500H.5v10h10v-5Q5 10 5 5.500" fill="#fff" stroke="#111"/><circle cx="10.500" cy="5.500" r="5" fill="none" stroke="#d33" stroke-dasharray="1 1"/>'],
            null,
            ['Összevonás', 'Ctrl+K', '<path d="M.5 5.500h10v10H.5z" fill="#b7cbe3" stroke="#11f"/><circle cx="10.500" cy="5.500" r="5" fill="#b7cbe3" stroke="#11f"/><path d="M5.500 5.500h5v5Q5.500 10 5.500 5.500Z" fill="#fff" stroke="#11f"/>'],
            ['Szétbontás', 'Shift+Ctrl+K', '<path d="M.5 5.500h10v10H.5z" fill="#b7cbe3" stroke="#11f"/><circle cx="10.500" cy="5.500" r="5" fill="#b7cbe3" stroke="#11f"/>'],
            null,
            ['Zsugorítás', 'Ctrl+(', '<path d="M0 .5Q13 1 15.500 15.500H8.500Q7 9 0 7.500Z" fill="#9fbbdb"/><path d="M0 7.500Q7 9 8.500 15.500H0Z" fill="#cddbeb"/><path d="M0 .5Q13 1 15.500 15.500" fill="none" stroke="#111" stroke-dasharray="2 1"/><path d="M0 7.500Q7 9 8.500 15.500" fill="none" stroke="#111"/><path d="M7 4v5h6z"/>'],
            ['Nyújtás', 'Ctrl+)', '<path d="M0 .5Q13 1 15.500 15.500H8.500Q7 9 0 7.500Z" fill="#9fbbdb"/><path d="M0 7.500Q7 9 8.500 15.500H0Z" fill="#cddbeb"/><path d="M0 .5Q13 1 15.500 15.500" fill="none" stroke="#111" stroke-width="1.500"/><path d="M0 7.500Q7 9 8.500 15.500" fill="none" stroke="#111" stroke-dasharray="2 1"/><path d="M4 6h6v6z"/>'],
            ['Dinamikus perem', 'Ctrl+J', '<path d="M0 .5Q13 1 15.500 15.500H0Z" fill="#6f9ed2"/><path d="M0 8Q7 9 8.500 15.500H0Z" fill="#cddbeb"/><path d="M0 .5Q13 1 15.500 15.500M0 8Q7 9 8.500 15.500" fill="none" stroke="#111" stroke-dasharray="2 1"/><path d="M0 4Q10 5 12.500 15.500" fill="none" stroke="#111"/>'],
            ['Kapcsolt perem', 'Ctrl+Alt+J', '<path d="M0 .5Q13 1 15.500 15.500H8.500Q7 9 0 7.500Z" fill="#9fbbdb"/><path d="M0 7.500Q7 9 8.500 15.500H0Z" fill="#cddbeb"/><path d="M0 .5Q13 1 15.500 15.500M0 7.500Q7 9 8.500 15.500" fill="none" stroke="#111"/>'],
            null,
            ['Útvonalak közötti kitöltés', ''],
            null,
            ['Egyszerűsítés', 'Ctrl+L'],
            ['Megfordítás', ''],
            null,
            ['Útvonaleffektusok...', 'Ctrl+&amp;'],
            ['Útvonaleffektus beillesztése', '&amp;'],
            ['Útvonaleffektus eltávolítása', '']
        ];
        document.getElementById('path-menu').innerHTML = menuItems.map((item, i) => {
            if (!item) return '<li class="h-px bg-[#e0dedb]"></li>';
            const [label, keys, icon] = item;
            const row = i === 0 ? 'bg-[#3584e4] text-white' : '';
            const hint = i === 0 ? 'text-[#9ac2f2]' : 'text-[#8b8e8f]';
            return `<li><button class="w-full h-[25px] flex items-center pl-[7px] pr-[7px] ${row}">
                <svg class="size-4 mr-[7px]" viewBox="0 0 16 16">${icon || ''}</svg>
                <span>${label}</span><span class="ml-auto ${hint}">${keys}</span></button></li>`;
        }).join('');

        // rulers: one unit is 19.37px, a tick every half unit
        const unit = 19.37;
        let x = '<rect y="27" width="100%" height="1"/>';
        for (let i = -46; i <= 135; i++) {
            const p = Math.round(449.8 + i * unit / 2);
            const h = i % 10 === 0 ? 26 : i % 5 === 0 ? 14 : 7;
            x += `<rect x="${p}" y="${28 - h}" width="1" height="${h}"/>`;
            if (i % 10 === 0) x += `<text x="${p + 1}" y="13">${i / 2}</text>`;
        }
        x += '<path d="M846 23h9l-4 5z"/>';
        document.getElementById('ruler-x').innerHTML = x;

        let y = '<rect x="17" width="1" height="100%"/>';
        for (let i = -6; i <= 74; i++) {
            const p = Math.round(65 + i * unit / 2);
            const w = i % 10 === 0 ? 18 : i % 5 === 0 ? 10 : 6;
            y += `<rect x="${18 - w}" y="${p}" width="${w}" height="1"/>`;
            if (i % 10 === 0) [...String(i / 2)].forEach((c, n) => {
                y += `<text x="4" y="${p + 10 + n * 10}">${c}</text>`;
            });
        }
        y += '<path d="M13 1h4v5z"/>';
        document.getElementById('ruler-y').innerHTML = y;

        const colors = ('000000 1a1a1a 333333 4d4d4d 666666 808080 999999 b3b3b3 cccccc e6e6e6 ececec f2f2f2 f9f9f9 ffffff ' +
            '800000 ff0000 808000 ffff00 008000 00ff00 008080 00ffff 000080 0000ff 800080 ff00ff ' +
            '2b0000 550000 800000 aa0000 d40000 ff0000 ff2a2a ff5555 ff8080 ffaaaa ffd5d5 ' +
            '280b0b 501616 782121 a02c2c c83737 d35f5f de8787 e9afaf f4d7d7 ' +
            '241c1c 483737 6c5353 916f6f ac9393 c8b7b7 e3dbdb ' +
            '2b1100 552200 803300 aa4400 d45500 ff6600 ff7f2a ff9955 ffb380 ffccaa ffe6d5 ' +
            '28170b 502d16 784421 a05a2c c87137 d38d5f deaa87 e9c6af f4e3d7 ' +
            '241f1c 483e37 6c5d53 917c6f ac9d93 c8beb7 e3dedb ' +
            '2b2200 554400 806600 aa8800 d4aa00 ffcc00 ffd42a ffdd55 ffe680 ffeeaa fff6d5 ' +
            '28220b 504416 786721 a0892c c8ab37 d3bc5f decd87').split(' ');
        document.getElementById('palette').innerHTML =
            '<button aria-label="Nincs" class="flex-1 bg-white"><svg class="size-full" viewBox="0 0 19 19" preserveAspectRatio="none"><path d="M1 0 19 19M19 0 1 19" stroke="#7a0c0c" stroke-width="1.500"/></svg></button>' +
            colors.map(c => `<button aria-label="#${c}" class="flex-1" style="background:#${c}"></button>`).join('');
    </script>
</body>
</html>
